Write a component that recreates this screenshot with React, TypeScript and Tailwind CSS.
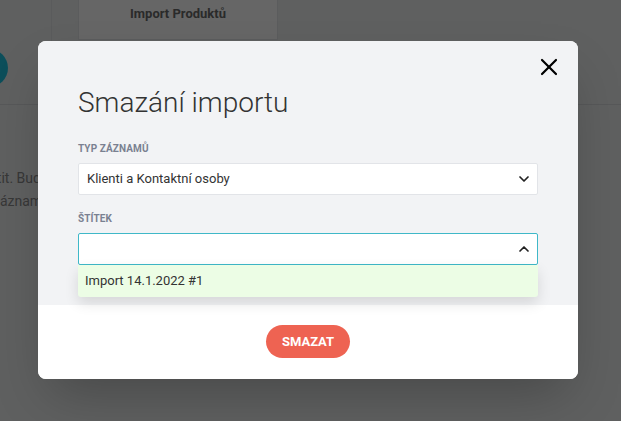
import React from 'react';
import { ChevronDown, ChevronUp, X } from 'lucide-react';

function Background() {
  return (
    <div className="absolute inset-0 bg-[#eef0f1] font-['Roboto',sans-serif]">
      <div className="flex h-[105px] border-b border-[#d9dcdf]">
        <div className="w-[52px] border-r border-[#e2e4e6] relative overflow-hidden">
          <div className="w-[38px] h-[38px] rounded-full bg-[#1fc4e2] -ml-[30px] mt-[49px]"></div>
        </div>
        <div className="w-[26px]"></div>
        <div className="w-[200px] h-[40px] bg-white border-x border-b border-[#e3e5e8] flex justify-center pt-[4px]">
          <span className="text-[13px] font-bold text-[#6a6a6a]">Import Produktů</span>
        </div>
      </div>
      <div className="mt-[62px] text-[14px] leading-[23px] text-[#8a8a8a] whitespace-nowrap">
        <p className="-ml-[22px]">vrátit. Budou</p>
        <p className="-ml-[7px]">záznamy</p>
      </div>
    </div>
  );
}

export default function App() {
  return (
    <div className="relative w-[621px] h-[421px] overflow-hidden">
      <Background />
      <div className="absolute inset-0 bg-black/60"></div>

      {/* Modal */}
      <div className="absolute left-[38px] top-[41px] w-[540px] rounded-lg overflow-hidden bg-white shadow-2xl font-['Roboto',sans-serif]">
        <div className="relative bg-[#f2f3f5] px-10 pt-[45px] pb-[40px]">
          <button className="absolute right-[11px] top-[8px] p-1 text-black">
            <X size={28} strokeWidth={1.9} />
          </button>

          <h2 className="text-[28px] leading-[34px] font-light text-[#333]">Smazání importu</h2>

          <div className="mt-[23px]">
            <label className="block text-[10px] leading-[12px] font-bold uppercase text-[#7a8191] tracking-[0.01em]">Typ záznamů</label>
            <div className="mt-[8px] h-[32px] bg-white border border-[#e2e4e8] rounded-[2px] flex items-center justify-between pl-[8px] pr-[5px]">
              <span className="text-[13px] text-[#333]">Klienti a Kontaktní osoby</span>
              <ChevronDown size={16} strokeWidth={2.6} className="text-[#222]" />
            </div>
          </div>

          <div className="mt-[18px]">
            <label className="block text-[10px] leading-[12px] font-bold uppercase text-[#7a8191] tracking-[0.01em]">Štítek</label>
            <div className="relative mt-[8px]">
              <div className="h-[32px] bg-white border border-[#3fb8c8] rounded-[2px] flex items-center justify-end pr-[5px]">
                <ChevronUp size={16} strokeWidth={2.6} className="text-[#222]" />
              </div>
              <div className="absolute left-0 right-0 top-[32px] z-10 h-[32px] bg-[#ecfde5] rounded-b-[3px] shadow-[0_6px_14px_rgba(0,0,0,0.12)] flex items-center pl-[7px]">
                <span className="text-[13px] text-[#333]">Import 14.1.2022 #1</span>
              </div>
            </div>
          </div>
        </div>

        <div className="flex justify-center pt-[20px] pb-[21px] bg-white">
          <button className="h-[33px] px-[16px] rounded-full bg-[#ee6352] text-white text-[13px] font-bold">SMAZAT</button>
        </div>
      </div>
    </div>
  );
}
